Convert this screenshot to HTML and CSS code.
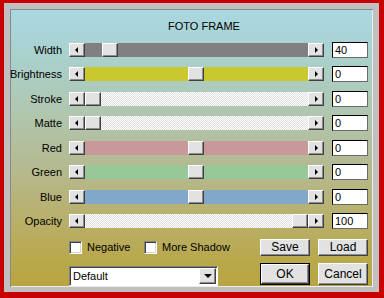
FILE: index.html
```html
<!DOCTYPE html>
<html>
<head>
<meta charset="utf-8">
<link rel="stylesheet" href="styles.css">
</head>
<body>
<div class="frame">
  <div class="bevel">
    <div class="panel">
      <div class="title">FOTO FRAME</div>
      <div class="rows">
        <div class="row"><span class="label">Width</span><div class="slider"><span class="btn arrow-left"></span><span class="track t-gray"><span class="thumb" style="left:17px"></span></span><span class="btn arrow-right"></span></div><div class="input">40</div></div>
        <div class="row"><span class="label">Brightness</span><div class="slider"><span class="btn arrow-left"></span><span class="track t-yellow"><span class="thumb" style="left:103px"></span></span><span class="btn arrow-right"></span></div><div class="input">0</div></div>
        <div class="row"><span class="label">Stroke</span><div class="slider"><span class="btn arrow-left"></span><span class="track t-check"><span class="thumb" style="left:0px"></span></span><span class="btn arrow-right"></span></div><div class="input">0</div></div>
        <div class="row"><span class="label">Matte</span><div class="slider"><span class="btn arrow-left"></span><span class="track t-check"><span class="thumb" style="left:0px"></span></span><span class="btn arrow-right"></span></div><div class="input">0</div></div>
        <div class="row"><span class="label">Red</span><div class="slider"><span class="btn arrow-left"></span><span class="track t-red"><span class="thumb" style="left:103px"></span></span><span class="btn arrow-right"></span></div><div class="input">0</div></div>
        <div class="row"><span class="label">Green</span><div class="slider"><span class="btn arrow-left"></span><span class="track t-green"><span class="thumb" style="left:103px"></span></span><span class="btn arrow-right"></span></div><div class="input">0</div></div>
        <div class="row"><span class="label">Blue</span><div class="slider"><span class="btn arrow-left"></span><span class="track t-blue"><span class="thumb" style="left:103px"></span></span><span class="btn arrow-right"></span></div><div class="input">0</div></div>
        <div class="row"><span class="label">Opacity</span><div class="slider"><span class="btn arrow-left"></span><span class="track t-check"><span class="thumb" style="left:207px"></span></span><span class="btn arrow-right"></span></div><div class="input">100</div></div>
      </div>
      <div class="bottom">
        <div class="left-col">
          <div class="checks">
            <label class="check check-first"><span class="box"></span>Negative</label>
            <label class="check"><span class="box"></span>More Shadow</label>
          </div>
          <div class="combo"><span class="combo-text">Default</span><span class="combo-btn"><span class="down"></span></span></div>
        </div>
        <div class="buttons">
          <div class="pbtn">Save</div>
          <div class="pbtn">Load</div>
          <div class="pbtn default"><span class="pbtn-inner">OK</span></div>
          <div class="pbtn">Cancel</div>
        </div>
      </div>
    </div>
  </div>
</div>
</body>
</html>
```

FILE: styles.css
```css
* { box-sizing: border-box; }
html, body { margin: 0; padding: 0; }
body {
  width: 384px;
  height: 298px;
  overflow: hidden;
  font-family: "Liberation Sans", Arial, sans-serif;
  font-size: 11px;
  color: #000;
}
.frame {
  width: 384px;
  height: 298px;
  background: #c80000;
  padding: 3px 5px 6px 4px;
}
.bevel {
  height: 100%;
  background: #c0c0c0;
  padding: 6px 6px 5px 6px;
}
.panel {
  height: 100%;
  padding: 11px 5px 0 0;
  background: linear-gradient(to bottom, #aad8e2 0%, #a9d2d0 15%, #b0c6ae 38%, #b4bb94 55%, #b8b06c 75%, #b9a84a 92%, #b8a540 100%);
  box-shadow: inset 1px 1px #8a8a8a, inset -1px -1px #ececec;
}
.title {
  height: 13px;
  line-height: 13px;
  padding-left: 158px;
  margin-bottom: 10px;
}
.rows {
  display: flex;
  flex-direction: column;
  gap: 10.43px;
}
.row {
  display: flex;
  align-items: center;
  height: 14px;
}
.label {
  width: 52px;
  text-align: right;
  line-height: 14px;
}
.slider {
  display: flex;
  width: 255px;
  height: 14px;
  margin-left: 7px;
}
.btn, .thumb {
  width: 16px;
  height: 14px;
  background: #e2e2e2;
  border: 1px solid;
  border-color: #ffffff #404040 #404040 #ffffff;
  box-shadow: inset -1px -1px #8c8c8c;
  flex: none;
  position: relative;
}
.arrow-left::after, .arrow-right::after {
  content: "";
  position: absolute;
  top: 3px;
  width: 0;
  height: 0;
  border-top: 3px solid transparent;
  border-bottom: 3px solid transparent;
}
.arrow-left::after { left: 5px; border-right: 3px solid #000; }
.arrow-right::after { left: 6px; border-left: 3px solid #000; }
.track {
  flex: 1;
  position: relative;
  height: 14px;
}
.thumb { position: absolute; top: 0; }
.t-gray { background: #808080; }
.t-yellow { background: #c9c82e; }
.t-red { background: #c99898; }
.t-green { background: #98c897; }
.t-blue { background: #81a8c9; }
.t-check {
  background: repeating-conic-gradient(#ffffff 0 25%, #dedede 0 50%) 0 0 / 2px 2px;
}
.input {
  width: 36px;
  height: 16px;
  margin-left: 8px;
  background: #fff;
  border: 1px solid;
  border-color: #000 #6a6a6a #6a6a6a #000;
  padding-left: 2px;
  line-height: 14px;
  font-size: 11px;
}
.bottom {
  display: flex;
  margin-top: 11px;
  padding-left: 59px;
}
.left-col {
  width: 192px;
}
.checks {
  display: flex;
  align-items: center;
  height: 17px;
}
.check {
  display: flex;
  align-items: center;
  gap: 5px;
  line-height: 13px;
}
.check-first { width: 75px; }
.box {
  width: 13px;
  height: 13px;
  background: #fff;
  border: 1px solid;
  border-color: #808080 #ffffff #ffffff #808080;
  box-shadow: inset 1px 1px #404040, inset -1px -1px #d4d4d4;
}
.combo {
  display: flex;
  align-items: center;
  justify-content: space-between;
  width: 149px;
  height: 20px;
  margin-top: 10px;
  background: #fff;
  border: 1px solid;
  border-color: #808080 #ffffff #ffffff #808080;
  box-shadow: inset 1px 1px #404040;
  padding: 2px 1px 1px 3px;
}
.combo-text { line-height: 14px; }
.combo-btn {
  width: 17px;
  height: 16px;
  background: #e2e2e2;
  border: 1px solid;
  border-color: #ffffff #404040 #404040 #ffffff;
  box-shadow: inset -1px -1px #8c8c8c;
  display: flex;
  align-items: center;
  justify-content: center;
}
.down {
  width: 0;
  height: 0;
  border-left: 4px solid transparent;
  border-right: 4px solid transparent;
  border-top: 4px solid #000;
}
.buttons {
  display: grid;
  grid-template-columns: 50px 50px;
  grid-template-rows: 17px 22px;
  column-gap: 8px;
  row-gap: 7px;
}
.pbtn {
  display: flex;
  align-items: center;
  justify-content: center;
  background: #e2e2e2;
  border: 1px solid;
  border-color: #ffffff #404040 #404040 #ffffff;
  box-shadow: inset -1px -1px #8c8c8c;
  font-size: 12px;
}
.pbtn.default {
  border: 1px solid #000;
  box-shadow: none;
  padding: 0;
}
.pbtn-inner {
  width: 100%;
  height: 100%;
  display: flex;
  align-items: center;
  justify-content: center;
  border: 1px solid;
  border-color: #ffffff #404040 #404040 #ffffff;
  box-shadow: inset -1px -1px #8c8c8c;
}
```
